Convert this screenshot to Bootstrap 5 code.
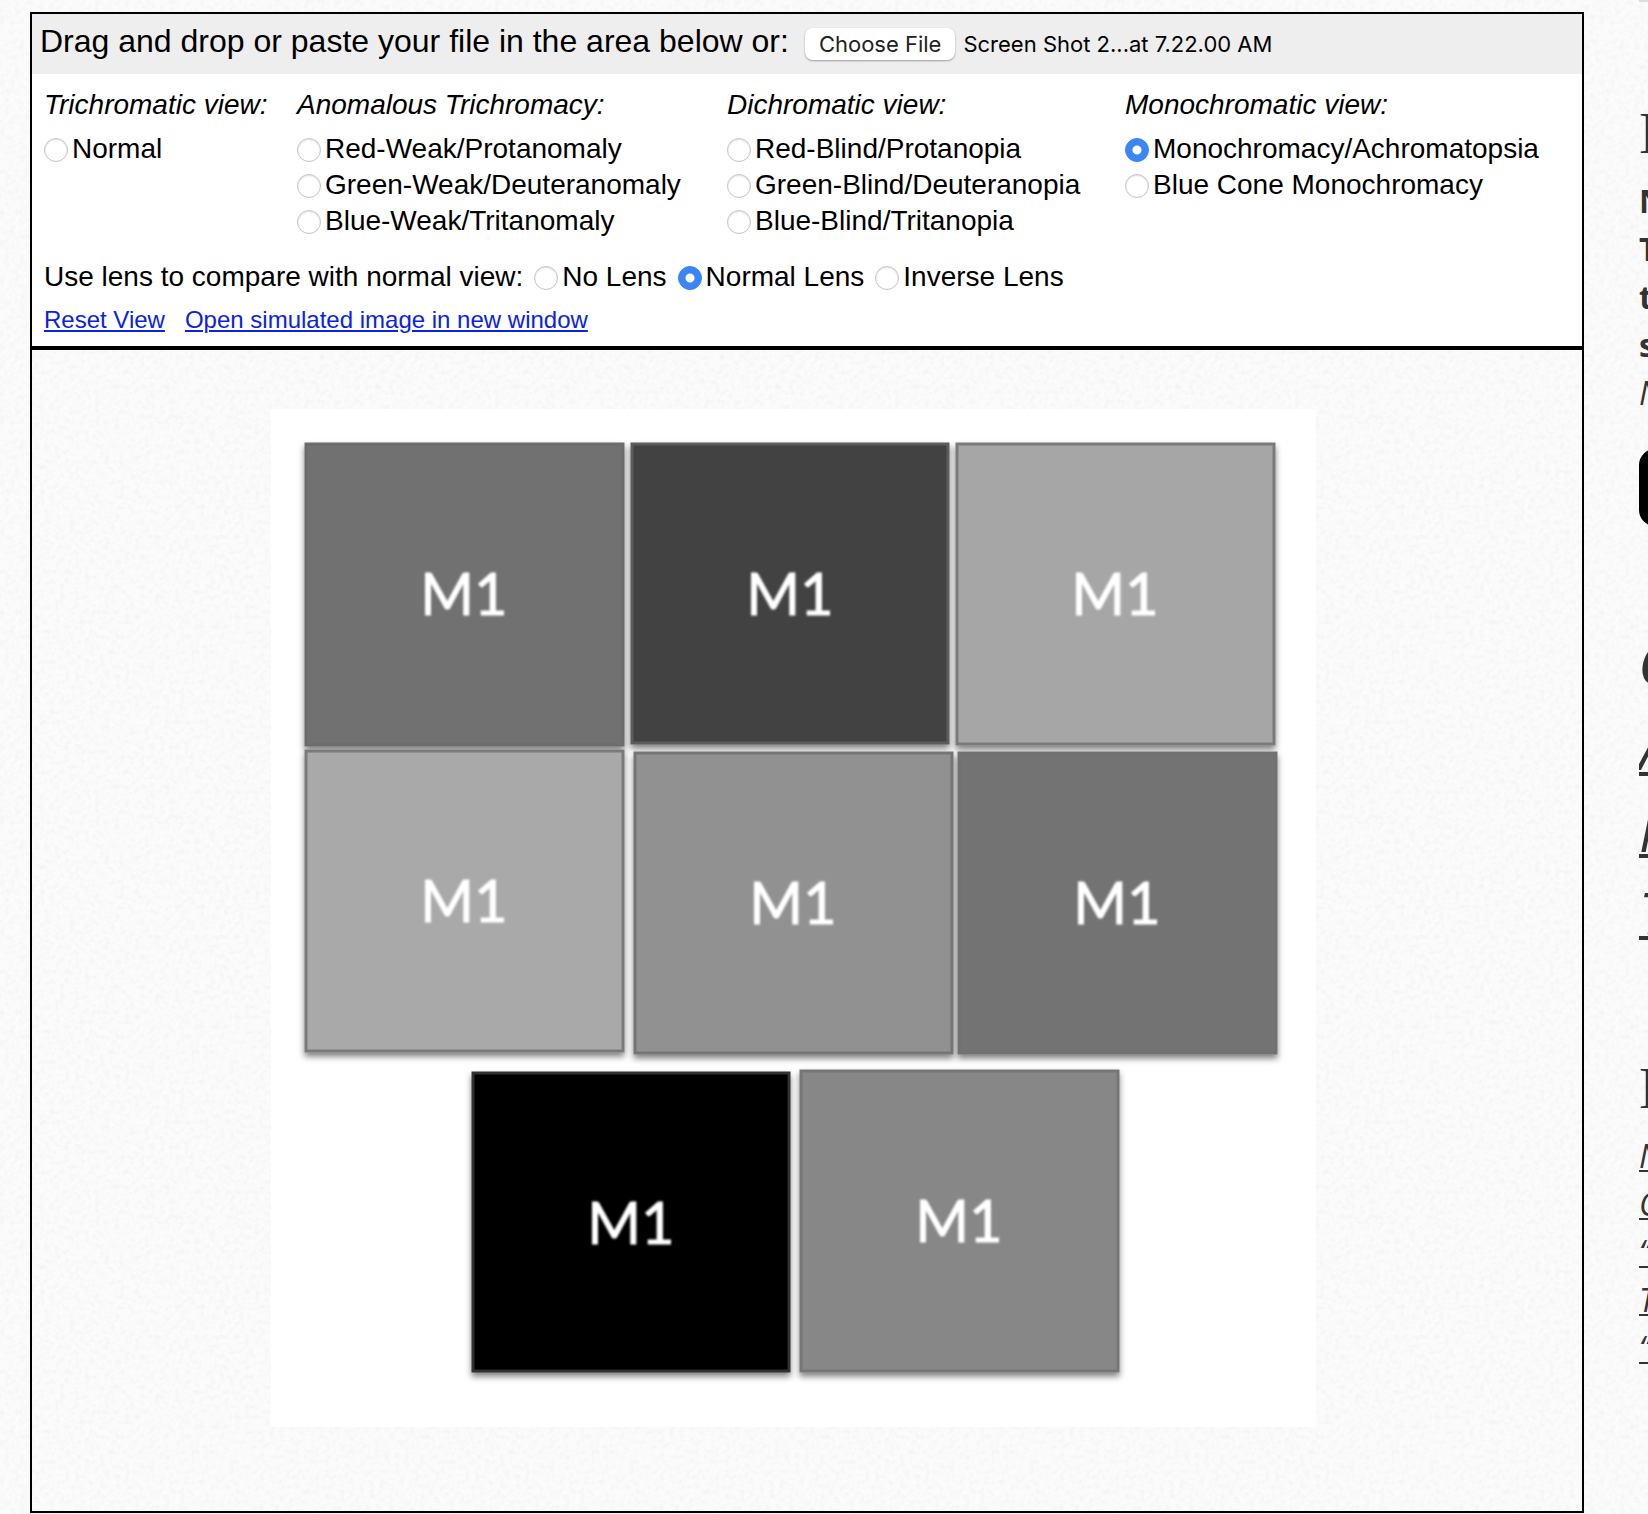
<!DOCTYPE html>
<html lang="en">
<head>
<meta charset="utf-8">
<meta name="viewport" content="width=device-width, initial-scale=1">
<title>Color Blindness Simulator</title>
<link href="https://cdn.jsdelivr.net/npm/bootstrap@5.3.0/dist/css/bootstrap.min.css" rel="stylesheet">
<style>
  body {
    font-family: "Liberation Sans", Arial, sans-serif;
    font-size: 28px;
    line-height: 36px;
    color: #000;
    background: #fbfbfb url("data:image/svg+xml,%3Csvg xmlns='http://www.w3.org/2000/svg' width='400' height='400'%3E%3Cfilter id='n' x='0' y='0' width='1' height='1'%3E%3CfeTurbulence type='fractalNoise' baseFrequency='.2' numOctaves='3' stitchTiles='stitch'/%3E%3CfeColorMatrix values='0 0 0 0 .5 0 0 0 0 .5 0 0 0 0 .5 .24 0 0 0 -.1'/%3E%3C/filter%3E%3Crect width='400' height='400' filter='url(%23n)'/%3E%3C/svg%3E");
    overflow-x: hidden;
  }
  .page { padding: 12px 0 0 30px; }
  .simulator { border: 2px solid #000; flex: 1 1 0; min-width: 0; }
  .upload-bar { background: #eee; padding: 7px 8px 12px; min-height: 60px; font-size: 32px; line-height: 40px; }
  .btn-file {
    font: 22px/32px Inter, sans-serif; color: #222; background: #fff; border: 0;
    border-radius: 8px; padding: 0 14px; box-shadow: 0 1px 2px rgba(0,0,0,.35);
  }
  .file-name { font: 22px/32px Inter, sans-serif; }
  .options { background: #fff; border-bottom: 4px solid #000; padding: 13px 0 10px 12px; }
  .views { display: grid; grid-template-columns: 253fr 430fr 398fr 457fr; }
  .view-title { font-size: 28px; line-height: 36px; font-style: italic; margin: 0 0 8px; padding: 0; float: none; }
  .choice { display: flex; align-items: center; gap: 4px; }
  .choice .form-check-input {
    float: none; margin: 2px 0 0; width: 24px; height: 24px; flex: none;
    border: 1px solid #c4c4c4; box-shadow: inset 0 1px 2px rgba(0,0,0,.12);
  }
  .choice .form-check-input:checked {
    border-color: #3b86f7; background-color: #3b86f7; box-shadow: none;
    background-image: radial-gradient(circle, #fff 4px, transparent 5px);
  }
  .lens-row { gap: 0 11px; }
  .tool-links { font-size: 24px; line-height: 32px; padding-top: 9px; }
  .tool-links a { color: #0a22e6; text-decoration-thickness: 2px; text-underline-offset: 2px; }
  .drop-area { padding: 59px 28px 84px 0; }
  .side {
    flex: 0 0 9px; overflow: hidden; white-space: nowrap; margin: -12px 0 0 55px;
    border-top: 2px solid #ddd; color: #333; font: 32px/48px "Open Sans", sans-serif;
  }
  .side a { color: #333; text-decoration-thickness: 2px; text-underline-offset: 2px; }
  .side h2 { font: 60px/72px "Liberation Serif", serif; margin: 0; }
  .side-intro { padding: 95px 0 32px; }
  .side-button { display: block; width: 240px; height: 77px; border: 0; border-radius: 16px; background: #000; }
  .side-big { font-size: 56px; line-height: 82px; padding: 93px 0 99px; }
  .side-big .fw-bold { line-height: 88px; }
  .side-big a { text-decoration-thickness: 4px; }
</style>
</head>
<body>
<div class="page d-flex align-items-start">
  <main class="simulator">
    <div class="upload-bar d-flex align-items-baseline">
      <span>Drag and drop or paste your file in the area below or:</span>
      <button type="button" class="btn-file ms-3" id="choose">Choose File</button>
      <input type="file" id="file" class="d-none" aria-label="Image file">
      <span class="file-name ms-2" id="name">Screen Shot 2...at 7.22.00 AM</span>
    </div>
    <form class="options">
      <div class="views">
        <fieldset>
          <legend class="view-title">Trichromatic view:</legend>
          <div class="choice"><input class="form-check-input" type="radio" name="view" id="v1"><label for="v1">Normal</label></div>
        </fieldset>
        <fieldset>
          <legend class="view-title">Anomalous Trichromacy:</legend>
          <div class="choice"><input class="form-check-input" type="radio" name="view" id="v2"><label for="v2">Red-Weak/Protanomaly</label></div>
          <div class="choice"><input class="form-check-input" type="radio" name="view" id="v3"><label for="v3">Green-Weak/Deuteranomaly</label></div>
          <div class="choice"><input class="form-check-input" type="radio" name="view" id="v4"><label for="v4">Blue-Weak/Tritanomaly</label></div>
        </fieldset>
        <fieldset>
          <legend class="view-title">Dichromatic view:</legend>
          <div class="choice"><input class="form-check-input" type="radio" name="view" id="v5"><label for="v5">Red-Blind/Protanopia</label></div>
          <div class="choice"><input class="form-check-input" type="radio" name="view" id="v6"><label for="v6">Green-Blind/Deuteranopia</label></div>
          <div class="choice"><input class="form-check-input" type="radio" name="view" id="v7"><label for="v7">Blue-Blind/Tritanopia</label></div>
        </fieldset>
        <fieldset>
          <legend class="view-title">Monochromatic view:</legend>
          <div class="choice"><input class="form-check-input" type="radio" name="view" id="v8" checked><label for="v8">Monochromacy/Achromatopsia</label></div>
          <div class="choice"><input class="form-check-input" type="radio" name="view" id="v9"><label for="v9">Blue Cone Monochromacy</label></div>
        </fieldset>
      </div>
      <div class="lens-row d-flex flex-wrap mt-3 pt-1">
        <span>Use lens to compare with normal view:</span>
        <div class="choice"><input class="form-check-input" type="radio" name="lens" id="l1"><label for="l1">No Lens</label></div>
        <div class="choice"><input class="form-check-input" type="radio" name="lens" id="l2" checked><label for="l2">Normal Lens</label></div>
        <div class="choice"><input class="form-check-input" type="radio" name="lens" id="l3"><label for="l3">Inverse Lens</label></div>
      </div>
      <div class="tool-links d-flex">
        <a href="#" class="me-3 pe-1">Reset View</a>
        <a href="#">Open simulated image in new window</a>
      </div>
    </form>
    <div class="drop-area d-flex justify-content-center">
      <svg class="img-fluid" width="1045" height="1018" viewBox="271 409 1045 1018" role="img" aria-label="Simulated image">
        <defs>
          <filter id="shade" x="-5%" y="-5%" width="110%" height="110%">
            <feGaussianBlur stdDeviation=".6" result="soft"/>
            <feDropShadow in="soft" dx="0" dy="4" stdDeviation="3" flood-color="#000" flood-opacity=".5"/>
          </filter>
          <filter id="soften"><feGaussianBlur stdDeviation=".8"/></filter>
        </defs>
        <rect x="271" y="409" width="1045" height="1018" fill="#fff"/>
        <g filter="url(#shade)" stroke-width="3">
          <rect x="306" y="444" width="317" height="301" fill="#717171" stroke="#6c6c6c"/>
          <rect x="632" y="444" width="316" height="299" fill="#424242" stroke="#5c5c5c"/>
          <rect x="957" y="444" width="317" height="300" fill="#a6a6a6" stroke="#7a7a7a"/>
          <rect x="306" y="751" width="317" height="300" fill="#a9a9a9" stroke="#7a7a7a"/>
          <rect x="635" y="753" width="317" height="300" fill="#919191" stroke="#757575"/>
          <rect x="959" y="753" width="317" height="300" fill="#737373" stroke="#717171"/>
          <rect x="473" y="1073" width="316" height="298" fill="#000" stroke="#333"/>
          <rect x="801" y="1071" width="317" height="300" fill="#878787" stroke="#767676"/>
        </g>
        <g fill="#fff" stroke="#fff" stroke-width="1" filter="url(#soften)" font-family="Lato, sans-serif" font-size="58" text-anchor="middle">
          <text x="464" y="615">M1</text>
          <text x="790" y="615">M1</text>
          <text x="1115" y="615">M1</text>
          <text x="464" y="922">M1</text>
          <text x="793" y="924">M1</text>
          <text x="1117" y="924">M1</text>
          <text x="631" y="1244">M1</text>
          <text x="959" y="1242">M1</text>
        </g>
      </svg>
    </div>
  </main>
  <aside class="side">
    <div class="side-intro">
      <h2>E</h2>
      <div class="fw-bold mt-2">N<br>T<br>t<br>s</div>
      <div class="fst-italic">N</div>
    </div>
    <button type="button" class="side-button" aria-label="Open"></button>
    <div class="side-big fst-italic">
      <div class="fw-bold">C</div>
      <a href="#">A</a><br><a href="#">M</a><br><a href="#">T</a>
    </div>
    <h2>E</h2>
    <div class="fst-italic mt-2">
      <a href="#">N</a><br><a href="#">C</a><br><a href="#">“</a><br><a href="#">T</a><br><a href="#">“</a>
    </div>
  </aside>
</div>
<script src="https://cdn.jsdelivr.net/npm/bootstrap@5.3.0/dist/js/bootstrap.bundle.min.js"></script>
<script>
  const file = document.getElementById('file');
  document.getElementById('choose').addEventListener('click', () => file.click());
  file.addEventListener('change', () => { if (file.files[0]) document.getElementById('name').textContent = file.files[0].name; });
</script>
</body>
</html>
